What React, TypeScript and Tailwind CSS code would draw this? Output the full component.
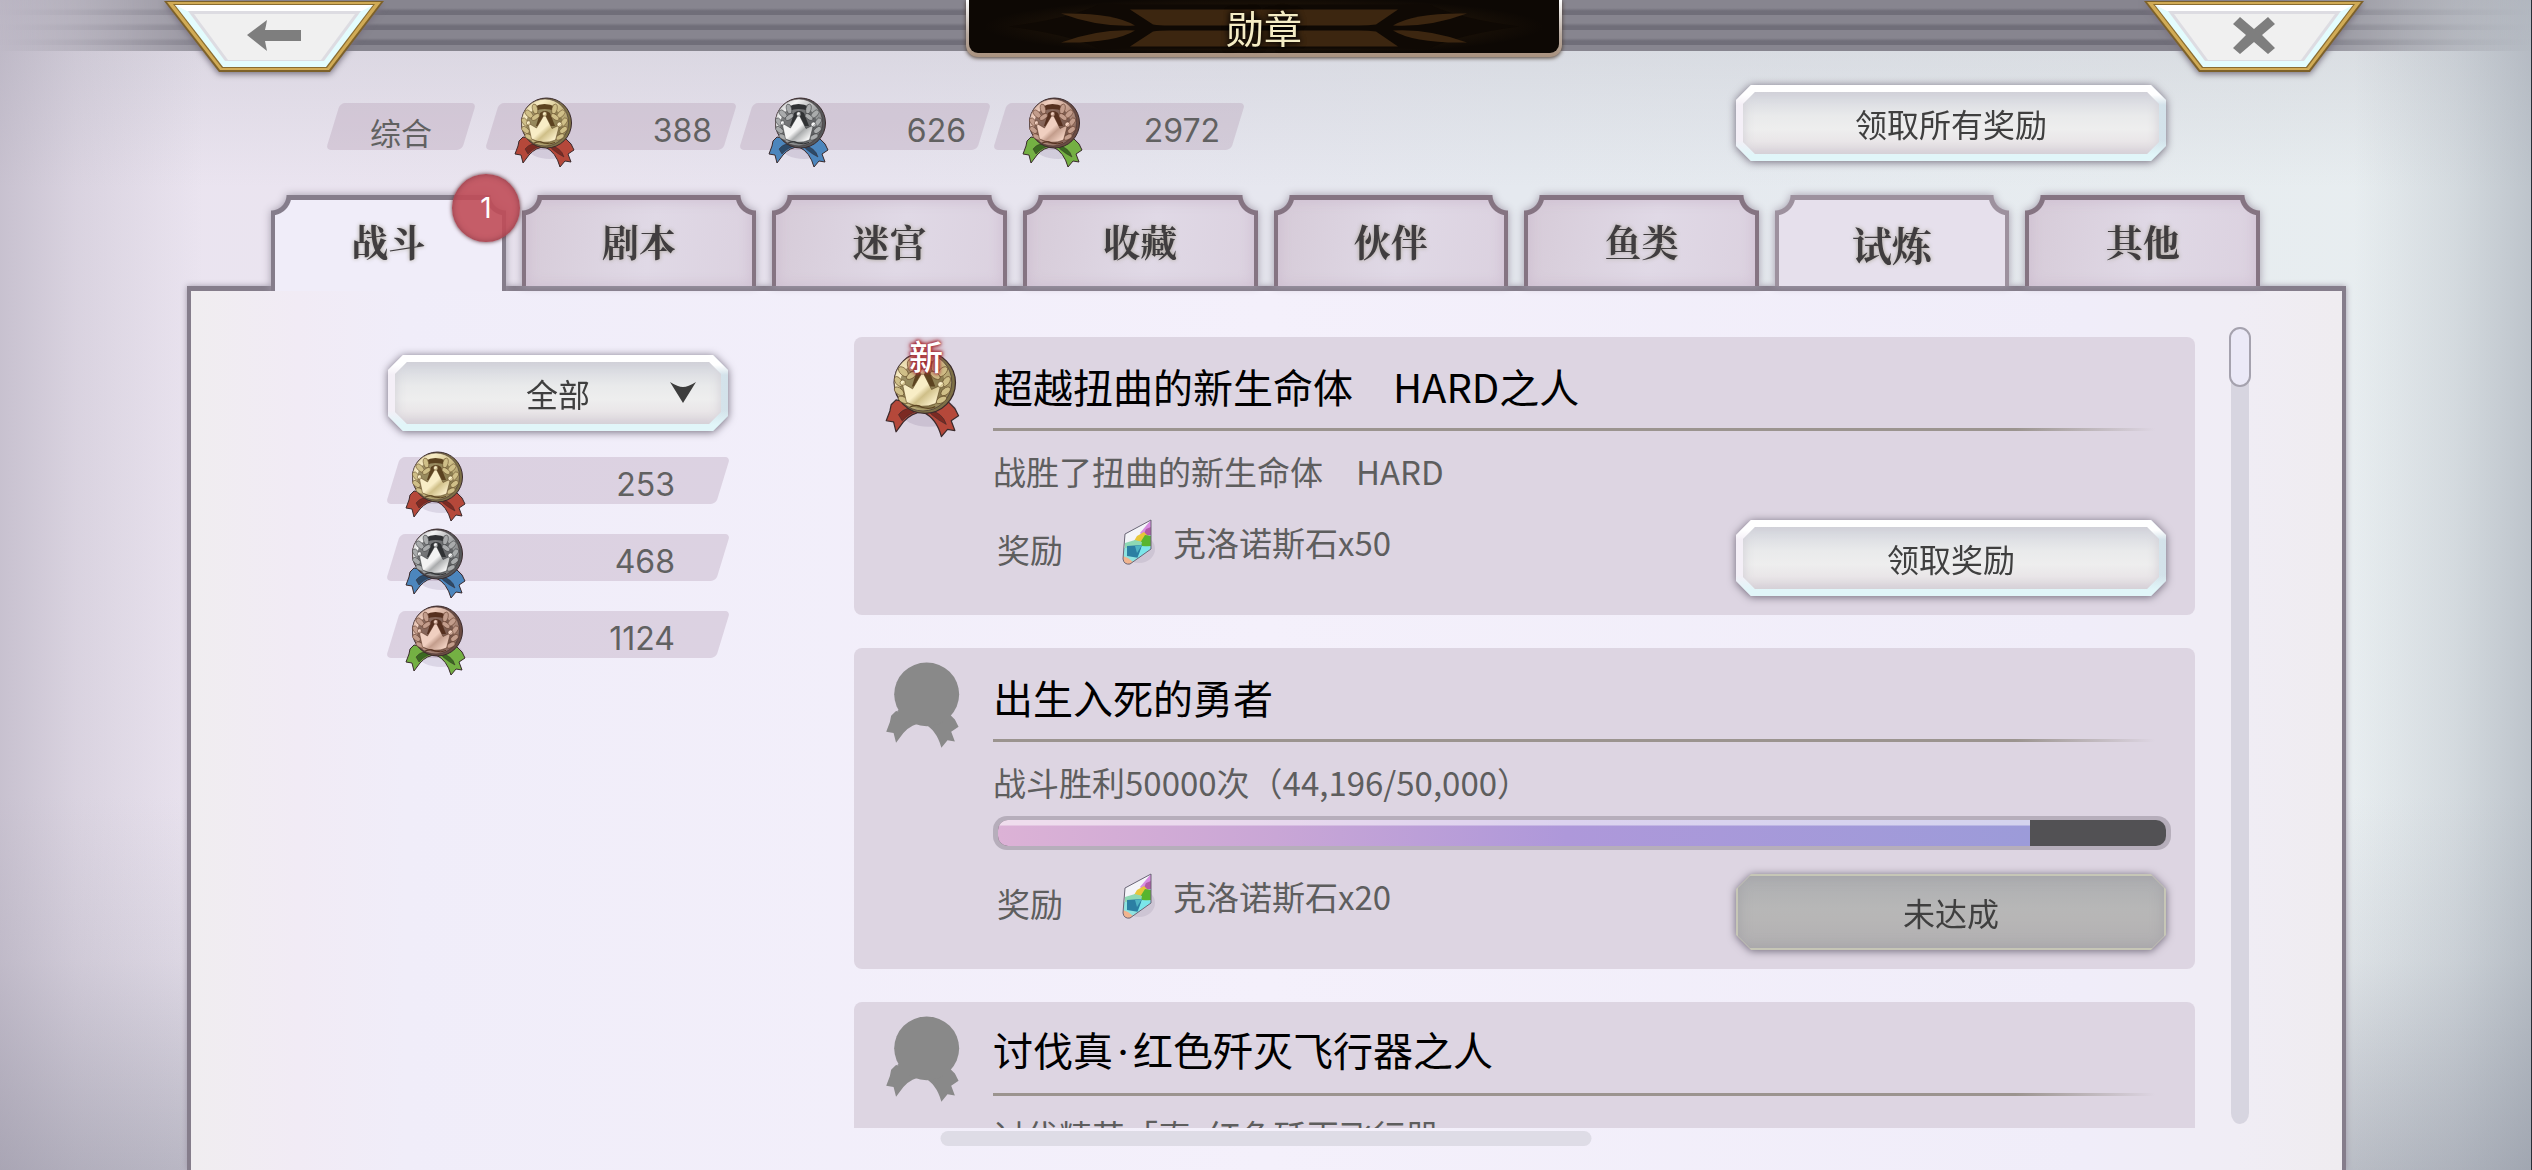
import { useState } from 'react';
import type { ReactNode } from 'react';

type Tone = 'gold' | 'silver' | 'bronze';

interface Achievement {
  id: number;
  title: string;
  detail: string;
  amount: number;
  isNew?: boolean;
  progress?: { current: number; total: number };
}

const TABS = ['战斗', '剧本', '迷宫', '收藏', '伙伴', '鱼类', '试炼', '其他'];

const TOTALS: { tone: Tone; count: number }[] = [
  { tone: 'gold', count: 388 },
  { tone: 'silver', count: 626 },
  { tone: 'bronze', count: 2972 },
];

const CATEGORY_COUNTS: { tone: Tone; count: number }[] = [
  { tone: 'gold', count: 253 },
  { tone: 'silver', count: 468 },
  { tone: 'bronze', count: 1124 },
];

const ACHIEVEMENTS: Achievement[] = [
  { id: 1, title: '超越扭曲的新生命体　HARD之人', detail: '战胜了扭曲的新生命体　HARD', amount: 50, isNew: true },
  {
    id: 2,
    title: '出生入死的勇者',
    detail: '战斗胜利50000次（44,196/50,000）',
    amount: 20,
    progress: { current: 44196, total: 50000 },
  },
  { id: 3, title: '讨伐真·红色歼灭飞行器之人', detail: '讨伐精英「真·红色歼灭飞行器」', amount: 20, progress: { current: 0, total: 1 } },
];

const MEDAL_COLORS = {
  gold: { rim: '#7d7046', light: '#f8edc6', mid: '#cfbf88', dark: '#5c4320', ribbon: '#b5483a', fold: '#7c2a22' },
  silver: { rim: '#555759', light: '#f3f3f3', mid: '#a9abac', dark: '#303234', ribbon: '#4c86bd', fold: '#2b4a69' },
  bronze: { rim: '#6b4c42', light: '#f0cfc0', mid: '#c39d8c', dark: '#56301f', ribbon: '#74b043', fold: '#3a6a20' },
};

const RIBBON_LEFT = 'M9 40 L5 44 L4 49 L1 57 L7 58 L9 66 L15 58 Q22 50 31 50 L28 44 Z';
const RIBBON_RIGHT = 'M51 41 L57 47 L60 53 L54 57 L57 65 L51 64 L46 70 Q42 55 31 50 L36 44 Z';

const Medal = ({ tone, className }: { tone: Tone; className: string }) => {
  const c = MEDAL_COLORS[tone];
  return (
    <svg viewBox="0 0 62 72" className={className} aria-hidden="true">
      <defs>
        <linearGradient id={`face-${tone}`} x1="0" y1="0" x2="1" y2="1">
          <stop offset="0" stopColor={c.mid} />
          <stop offset="0.25" stopColor={c.light} />
          <stop offset="0.5" stopColor={c.mid} />
          <stop offset="1" stopColor={c.rim} />
        </linearGradient>
        <linearGradient id={`crown-${tone}`} x1="0" y1="0" x2="1" y2="1">
          <stop offset="0.5" stopColor={c.light} />
          <stop offset="0.62" stopColor={c.mid} />
          <stop offset="0.85" stopColor={c.light} />
        </linearGradient>
      </defs>
      <ellipse cx="36" cy="50" rx="23" ry="12" fill="#6f6080" opacity="0.16" />
      <g stroke="#3a2a2c" strokeWidth="1" strokeLinejoin="round">
        <path d={RIBBON_LEFT} fill={c.ribbon} />
        <path d={RIBBON_RIGHT} fill={c.ribbon} />
        <path d="M11 52 Q17 44 29 48 Q19 51 14 57 Z" fill={c.fold} strokeWidth="0.5" />
        <path d="M35 48 Q47 50 50 60 Q44 57 38 52 Z" fill={c.fold} strokeWidth="0.5" />
        <circle cx="32.5" cy="26" r="25" fill={c.rim} />
        <circle cx="31" cy="25.5" r="23.5" fill={`url(#face-${tone})`} strokeWidth="0.5" />
      </g>
      <ellipse cx="30.5" cy="28" rx="18.5" ry="19" fill={c.rim} opacity="0.75" />
      <path d="M20 10 Q30 4 42 10 L41 14 Q30 10 21 14 Z" fill={c.dark} />
      <path d="M22 29 L26 16 Q31 12 36 16 L41 29 Z" fill={c.dark} />
      <g fill={c.mid} stroke={c.dark} strokeWidth="0.5">
        <ellipse cx="21" cy="12" rx="2.6" ry="5" transform="rotate(-12 21 12)" />
        <ellipse cx="15" cy="17" rx="2.8" ry="5" transform="rotate(-45 15 17)" />
        <ellipse cx="21.5" cy="20" rx="2.4" ry="4.6" transform="rotate(55 21.5 20)" />
        <ellipse cx="11" cy="25" rx="2.6" ry="4.6" transform="rotate(-35 11 25)" />
        <ellipse cx="11.5" cy="33" rx="2.6" ry="4.6" transform="rotate(-50 11.5 33)" />
        <ellipse cx="15" cy="40" rx="2.4" ry="4.6" transform="rotate(-62 15 40)" />
        <ellipse cx="40.5" cy="12" rx="2.6" ry="5" transform="rotate(12 40.5 12)" />
        <ellipse cx="47" cy="17" rx="2.8" ry="5" transform="rotate(45 47 17)" />
        <ellipse cx="41" cy="20" rx="2.4" ry="4.6" transform="rotate(-55 41 20)" />
        <ellipse cx="50" cy="25" rx="2.6" ry="4.6" transform="rotate(35 50 25)" />
        <ellipse cx="49.5" cy="33" rx="2.6" ry="4.6" transform="rotate(50 49.5 33)" />
        <ellipse cx="46" cy="40" rx="2.4" ry="4.6" transform="rotate(62 46 40)" />
      </g>
      <g fill={`url(#crown-${tone})`} stroke={c.dark} strokeWidth="0.5">
        <path d="M14 26 L22.5 31 L30.7 17 L38 31.5 L45.5 28 L41.5 43 Q30 48 17.5 42 Z" />
        <circle cx="14.5" cy="26" r="2.2" />
        <circle cx="30.7" cy="17" r="2.2" />
        <circle cx="45.5" cy="27.5" r="2.5" />
      </g>
      <path d="M20 46 Q26 43 30 46 Q36 48 41 45.5" fill="none" stroke={c.dark} strokeWidth="1" />
    </svg>
  );
};

const LockedMedal = ({ className }: { className: string }) => (
  <svg viewBox="0 0 62 72" className={className} fill="#898989" aria-hidden="true">
    <path d={RIBBON_LEFT} />
    <path d={RIBBON_RIGHT} />
    <path d="M10 40 L20 47 Q31 52 40 47 L52 41 L44 34 H18 Z" />
    <ellipse cx="34" cy="26.5" rx="26.5" ry="26" />
  </svg>
);

const Gem = () => (
  <svg viewBox="0 0 42 48" className="h-12 w-[42px]" aria-hidden="true">
    <ellipse cx="24" cy="31" rx="16" ry="14" fill="#6f6080" opacity="0.14" />
    <path d="M10 16 L36 2 V31 L15 46 Q9 47 8 41 Z" fill="#8fe3e0" />
    <path d="M10 16 L36 2 L24 19 L17 25 L9 30 Z" fill="#f4f4f8" />
    <path d="M36 2 V17 L28 18 L25 15 Z" fill="#d78be0" />
    <path d="M28 18 L31 11 L36 9 V17 Z" fill="#b25aa8" />
    <path d="M22 18 L29 14 L33 18 L27 24 L19 23 Z" fill="#e8c63a" />
    <path d="M25 25 L30 17 L36 18 V28 L27 29 Z" fill="#58b52f" />
    <path d="M10 25 L20 22 L27 24 L26 29 L10 30 Z" fill="#8ed8b4" />
    <path d="M12 28 L27 27 L24 40 L12 38 Z" fill="#2b7fa3" />
    <path d="M20 28 L27 27 L22 35 Z" fill="#4fb4c4" />
    <path d="M27 28 L36 29 V31 L22 41 Z" fill="#7be6ea" />
    <path d="M8 38 L13 40 L18 44 L15 46 Q9 47 8 41 Z" fill="#f1b48e" />
    <path d="M10 16 L36 2 V31 L15 46 Q9 47 8 41 Z" fill="none" stroke="#6d6576" strokeWidth="1" />
  </svg>
);

const OCTAGON =
  '[clip-path:polygon(15px_0,calc(100%-15px)_0,100%_15px,100%_calc(100%-15px),calc(100%-15px)_100%,15px_100%,0_calc(100%-15px),0_15px)]';
const OCTAGON_INNER =
  '[clip-path:polygon(12px_0,calc(100%-12px)_0,100%_12px,100%_calc(100%-12px),calc(100%-12px)_100%,12px_100%,0_calc(100%-12px),0_12px)]';

const Bevel = ({ muted = false, children }: { muted?: boolean; children: ReactNode }) => (
  <span
    className={`block h-full w-full ${OCTAGON} ${
      muted
        ? 'bg-[#c6c6b6] p-[2px]'
        : 'bg-[linear-gradient(180deg,#fff_0_10px,transparent_20px_55px,#e1f6f9_70px),linear-gradient(90deg,#f4eff7,#f4eff7_50%,#d3e2ea)] p-[7px]'
    }`}
  >
    <span
      className={`flex h-full w-full items-center justify-center ${OCTAGON_INNER} ${
        muted
          ? 'bg-[linear-gradient(180deg,#adaeb1,#b7b7b7_45%,#b7b6b6_60%,#b1afb1)] shadow-[inset_0_0_14px_#a3a2a6]'
          : 'bg-[linear-gradient(180deg,#d3d5dd,#e9eaeb_38%,#eeeeee_60%,#e9e6e8_80%,#dcd5db)] shadow-[inset_0_0_12px_#cfccd4]'
      }`}
    >
      {children}
    </span>
  </span>
);

const BevelButton = ({ muted, children }: { muted?: boolean; children: ReactNode }) => (
  <button
    type="button"
    disabled={muted}
    className="h-[78px] w-[432px] shrink-0 p-px text-[32px] text-[#3f3f3f] drop-shadow-[0_1px_4px_#6f6878]"
  >
    <Bevel muted={muted}>{children}</Bevel>
  </button>
);

const CornerButton = ({ label, children }: { label: string; children: ReactNode }) => (
  <button type="button" aria-label={label} className="relative h-[74px] w-[220px] drop-shadow-[0_2px_3px_#77707f]">
    <svg viewBox="0 0 220 74" className="h-full w-full" aria-hidden="true">
      <path d="M0 1 H220 L166 72 H55 Z" fill="#7d612a" />
      <path d="M3 2 H217 L165 70 H56 Z" fill="#d1ab55" />
      <path d="M9 4 H211 L163 68 H58 Z" fill="#8a6c30" />
      <path d="M11 5 H209 L162 67 H59 Z" fill="#e3fcfd" />
      <path d="M11 5 H209 L198 11 H23 Z" fill="#ffffff" />
      <path d="M24 11 H197 L160 61 H61 Z" fill="#dddce2" />
      <path d="M30 14 H191 L157 60 H64 Z" fill="#f0f0f0" />
      {children}
    </svg>
  </button>
);

const SlantRow = ({ tone, count, inset, className }: { tone: Tone; count: number; inset: string; className: string }) => (
  <li className={`relative flex h-[47px] items-center justify-end pt-2 ${className}`}>
    <span className="absolute inset-x-1.5 inset-y-0 -skew-x-[17deg] rounded-[5px] bg-[#b49fb4]/35" />
    <Medal tone={tone} className={`absolute -top-1.5 h-[72px] w-[62px] ${inset}`} />
    <span className="relative font-[Inter,sans-serif] text-[32px] leading-none text-[#616161]">{count}</span>
  </li>
);

const NOTCH =
  '[mask-composite:intersect] [mask-image:radial-gradient(circle_at_0_0,transparent_15px,#000_16px),radial-gradient(circle_at_100%_0,transparent_15px,#000_16px)]';
const NOTCH_INNER =
  '[mask-composite:intersect] [mask-image:radial-gradient(circle_at_-4px_-5px,transparent_20px,#000_21px),radial-gradient(circle_at_calc(100%+4px)_-5px,transparent_20px,#000_21px)]';

const Tab = ({ label, active, onSelect }: { label: string; active: boolean; onSelect: () => void }) => {
  const highlighted = label === '试炼';
  const frame = active ? 'bg-[#857d8b]' : highlighted ? 'bg-[#9d919e]' : 'bg-[#857482]';
  const fill = active
    ? 'bg-[#f0edf9]'
    : highlighted
      ? 'bg-[#e6e0ec]'
      : 'bg-[linear-gradient(100deg,#d6cbd8,#e0d9e6_55%,#dbd1df)] shadow-[inset_0_0_14px_#cdbdd0]';
  return (
    <button
      type="button"
      role="tab"
      aria-selected={active}
      onClick={onSelect}
      className={`relative text-[#403d3f] drop-shadow-[0_0_4px_#a39cab] ${
        active ? 'z-10 h-24 [clip-path:inset(-12px_-12px_0_-12px)]' : 'h-[91px]'
      }`}
    >
      <span className={`block h-full px-1 pt-[5px] ${frame} ${NOTCH}`}>
        <span
          className={`flex h-full justify-center font-['Noto_Serif_CJK_SC','Noto_Sans_CJK_SC',serif] font-bold ${fill} ${NOTCH_INNER} ${
            highlighted ? 'pt-[18px] text-[40px] leading-[52px]' : 'pt-[15px] text-[37px] leading-[52px]'
          } [text-shadow:0_0_4px_#a9a596]`}
        >
          {label}
        </span>
      </span>
    </button>
  );
};

const ProgressBar = ({ current, total }: { current: number; total: number }) => (
  <div
    role="progressbar"
    aria-valuenow={current}
    aria-valuemax={total}
    className="h-[34px] rounded-[14px] bg-[#b6aebb] px-[5px] py-1"
  >
    <div className="h-full overflow-hidden rounded-[10px] bg-[#525154]">
      <div
        className="h-full bg-[linear-gradient(180deg,#ffffff90_0_5px,transparent_6px),linear-gradient(90deg,#dcb2d6,#c9a6d6_27%,#ae98da_55%,#9c9bd9)]"
        style={{ width: `${(current / total) * 100}%` }}
      />
    </div>
  </div>
);

// The middle dot takes half a character instead of a full one.
const DottedText = ({ text }: { text: string }) => {
  const [head, ...rest] = text.split('·');
  return (
    <span>
      {head}
      {rest.map((part) => (
        <span key={part}>
          <span className="inline-block w-[0.5em] text-center font-[Inter,sans-serif]">·</span>
          {part}
        </span>
      ))}
    </span>
  );
};

const AchievementCard = ({ item }: { item: Achievement }) => (
  <li className="flex shrink-0 rounded-lg bg-[#ddd5e2] pr-6 pb-[18px]">
    <div className="relative w-[139px] shrink-0 pt-[13px] pl-[31px]">
      {item.isNew ? (
        <Medal tone="gold" className="h-[90px] w-[76px]" />
      ) : (
        <LockedMedal className="h-[90px] w-[76px]" />
      )}
      {item.isNew && (
        <span className="absolute top-0 left-[55px] text-[34px] leading-[38px] font-medium text-white [text-shadow:0_0_3px_#a8323c,0_0_3px_#a8323c,0_0_4px_#a8323c,0_0_6px_#a8323c]">
          新
        </span>
      )}
    </div>
    <div className="min-w-0 flex-1">
      <h2 className="flex h-[91px] items-center pt-1.5 text-[40px] leading-none text-black">
        <DottedText text={item.title} />
      </h2>
      <div className="mr-4 h-[3px] bg-[linear-gradient(90deg,#9b948f_88%,transparent)]" />
      <p className="flex h-[74px] items-center pt-1.5 text-[33px] leading-none text-[#5e5e5e]">
        <DottedText text={item.detail} />
      </p>
      {item.progress && <ProgressBar {...item.progress} />}
      <div className={`flex pr-1 text-[33px] leading-10 text-[#5e5e5e] ${item.progress ? 'mt-[23px]' : 'mt-[14px]'}`}>
        <span className="mt-2.5 ml-1 w-[118px]">奖励</span>
        <span className="flex h-[46px] flex-1 items-center gap-4">
          <Gem />
          克洛诺斯石x{item.amount}
        </span>
        <BevelButton muted={!!item.progress}>{item.progress ? '未达成' : '领取奖励'}</BevelButton>
      </div>
    </div>
  </li>
);

const TitlePlate = () => (
  <div className="h-[57px] w-[596px] rounded-b-xl bg-[linear-gradient(180deg,#fff,#b8aaa0_60%,#a8917e)] px-[3px] pb-1 drop-shadow-[0_1px_2px_#4a3b30]">
    <div className="relative flex h-full items-center justify-center rounded-b-[9px] bg-[#0d0804]">
      <svg viewBox="0 0 590 52" className="absolute inset-0 h-full w-full" aria-hidden="true">
        <defs>
          <radialGradient id="plate-glow">
            <stop offset="0" stopColor="#3a2710" />
            <stop offset="1" stopColor="#0d0804" />
          </radialGradient>
        </defs>
        <ellipse cx="295" cy="26" rx="280" ry="30" fill="url(#plate-glow)" />
        <path d="M40 26 Q100 18 130 4 L460 4 Q490 18 550 26 Q490 34 460 48 L130 48 Q100 34 40 26 Z" fill="#0f0904" />
        <path d="M161 9 H429 L407 24 Q400 25 390 25 H200 Q190 25 184 24 Z" fill="#3c2610" />
        <path d="M161 46 H429 L407 31 Q400 30 390 30 H200 Q190 30 184 31 Z" fill="#3c2610" />
        <path d="M92 13 Q145 12 166 25 Q130 27 92 13 Z" fill="#3c2610" />
        <path d="M92 42 Q145 43 166 30 Q130 28 92 42 Z" fill="#3c2610" />
        <path d="M498 13 Q445 12 424 25 Q460 27 498 13 Z" fill="#3c2610" />
        <path d="M498 42 Q445 43 424 30 Q460 28 498 42 Z" fill="#3c2610" />
      </svg>
      <h1 className="relative text-[38px] leading-[52px] text-[#f4ecc4] [text-shadow:0_0_6px_#000,0_0_6px_#000]">勋章</h1>
    </div>
  </div>
);

export default function App() {
  const [activeTab, setActiveTab] = useState('战斗');
  const [filter, setFilter] = useState('all');

  return (
    <main className="relative flex h-screen min-h-[720px] flex-col overflow-hidden border-r border-[#2b3038] bg-[linear-gradient(90deg,#8d879960,#8d879930_3%,transparent_8%,transparent_93%,#7d859430_97%,#7d859466),linear-gradient(180deg,#b9b9c266,transparent_16%,transparent_68%,#8a8c9a20_82%,#8a8c9a80),linear-gradient(90deg,#ebe4f0,#e8e4ef_35%,#e5e9ef_60%,#e8eef0)] font-['Noto_Sans_CJK_SC',sans-serif]">
      <header className="relative z-20 flex h-[51px] shrink-0 items-start justify-between pr-[167px] pl-[164px]">
        <div className="absolute inset-0 bg-[repeating-linear-gradient(180deg,#87858f_0_8px,#706e79_11px_15px)] [mask-image:linear-gradient(90deg,transparent,#000_10%,#000_90%,transparent)]" />
        <CornerButton label="返回">
          <path d="M83 35 L103 20 Q102 26 101 30 H137 V41 H101 Q102 46 103 51 Z" fill="#7e7e7e" />
        </CornerButton>
        <div className="relative">
          <TitlePlate />
        </div>
        <CornerButton label="关闭">
          <path d="M96 17 L110 29 L124 17 L131 24 L118 35 L131 48 L124 54 L110 42 L96 54 L89 48 L102 35 L89 24 Z" fill="#7e7e7e" />
        </CornerButton>
      </header>

      <section className="flex shrink-0 items-start justify-between pt-[33px] pr-[364px] pb-[33px] pl-[327px]">
        <div className="mt-[19px] flex">
          <div className="relative flex h-[47px] w-[148px] items-center justify-center pt-2.5">
            <span className="absolute inset-x-1.5 inset-y-0 -skew-x-[17deg] rounded-[5px] bg-[#b49fb4]/35" />
            <span className="relative text-[31px] leading-none text-[#616161]">综合</span>
          </div>
          <ul className="ml-[11px] flex gap-1">
            {TOTALS.map((t) => (
              <SlantRow key={t.tone} {...t} inset="left-7" className="w-[250px] pr-6" />
            ))}
          </ul>
        </div>
        <BevelButton>领取所有奖励</BevelButton>
      </section>

      <div role="tablist" className="relative mx-[271px] grid shrink-0 grid-cols-8 items-start gap-4">
        {TABS.map((label) => (
          <Tab key={label} label={label} active={label === activeTab} onSelect={() => setActiveTab(label)} />
        ))}
        <span className="absolute -top-[21px] left-[181px] z-20 flex size-[68px] items-center justify-center rounded-full bg-[#c04c58]/90 font-[Inter,sans-serif] text-[28px] text-white shadow-[0_0_4px_#5a3038,inset_0_0_6px_#8f3c48]">
          1
        </span>
      </div>

      <section className="-mt-[5px] mr-[185px] ml-[187px] flex min-h-0 flex-1 border-x-4 border-t-[5px] border-[#857d8b] bg-[linear-gradient(90deg,#f0edf0,#f1ebf5_5%,#f0edf9_10%,#f4f0fb_50%,#f0edf9_88%,#f0edf5_95%,#efecf0)] pr-[91px] pl-[196px] shadow-[0_0_6px_#a39cab]">
        <aside className="mt-[63px] w-[342px] shrink-0">
          <div className="relative h-[78px] p-px drop-shadow-[0_1px_4px_#6f6878]">
            <Bevel>
              <select
                aria-label="筛选"
                value={filter}
                onChange={(e) => setFilter(e.target.value)}
                className="h-full w-full appearance-none text-center text-[32px] text-[#3f3f3f] [text-align-last:center]"
              >
                <option value="all">全部</option>
                <option value="open">未达成</option>
              </select>
            </Bevel>
            <svg viewBox="0 0 26 22" className="pointer-events-none absolute top-7 right-[33px] h-[22px] w-[26px]" aria-hidden="true">
              <path d="M0 0 Q8 5 13 5 Q18 5 26 0 L13 21 Z" fill="#3d3d3d" />
            </svg>
          </div>
          <ul className="mt-[25px] flex flex-col gap-[30px]">
            {CATEGORY_COUNTS.map((t) => (
              <SlantRow key={t.tone} {...t} inset="left-[18px]" className="pr-[54px]" />
            ))}
          </ul>
        </aside>

        <div className="mb-[42px] ml-[125px] flex min-h-0 flex-1 overflow-y-auto pt-[46px] [scrollbar-width:none]">
          <ul className="flex min-w-0 flex-1 flex-col gap-[33px]">
            {ACHIEVEMENTS.map((item) => (
              <AchievementCard key={item.id} item={item} />
            ))}
          </ul>
        </div>

        <div className="mt-9 mb-[46px] ml-[34px] flex w-[22px] shrink-0 justify-center rounded-full bg-[#d7d5e0] bg-clip-content px-0.5">
          <div className="-mx-0.5 h-[60px] w-[22px] shrink-0 rounded-full border-2 border-[#a5a2ae] bg-[#ebe9f7]" />
        </div>
      </section>

      <div className="absolute bottom-6 left-1/2 h-[15px] w-[651px] -translate-x-1/2 rounded-full bg-[#dedce6]" />
    </main>
  );
}
